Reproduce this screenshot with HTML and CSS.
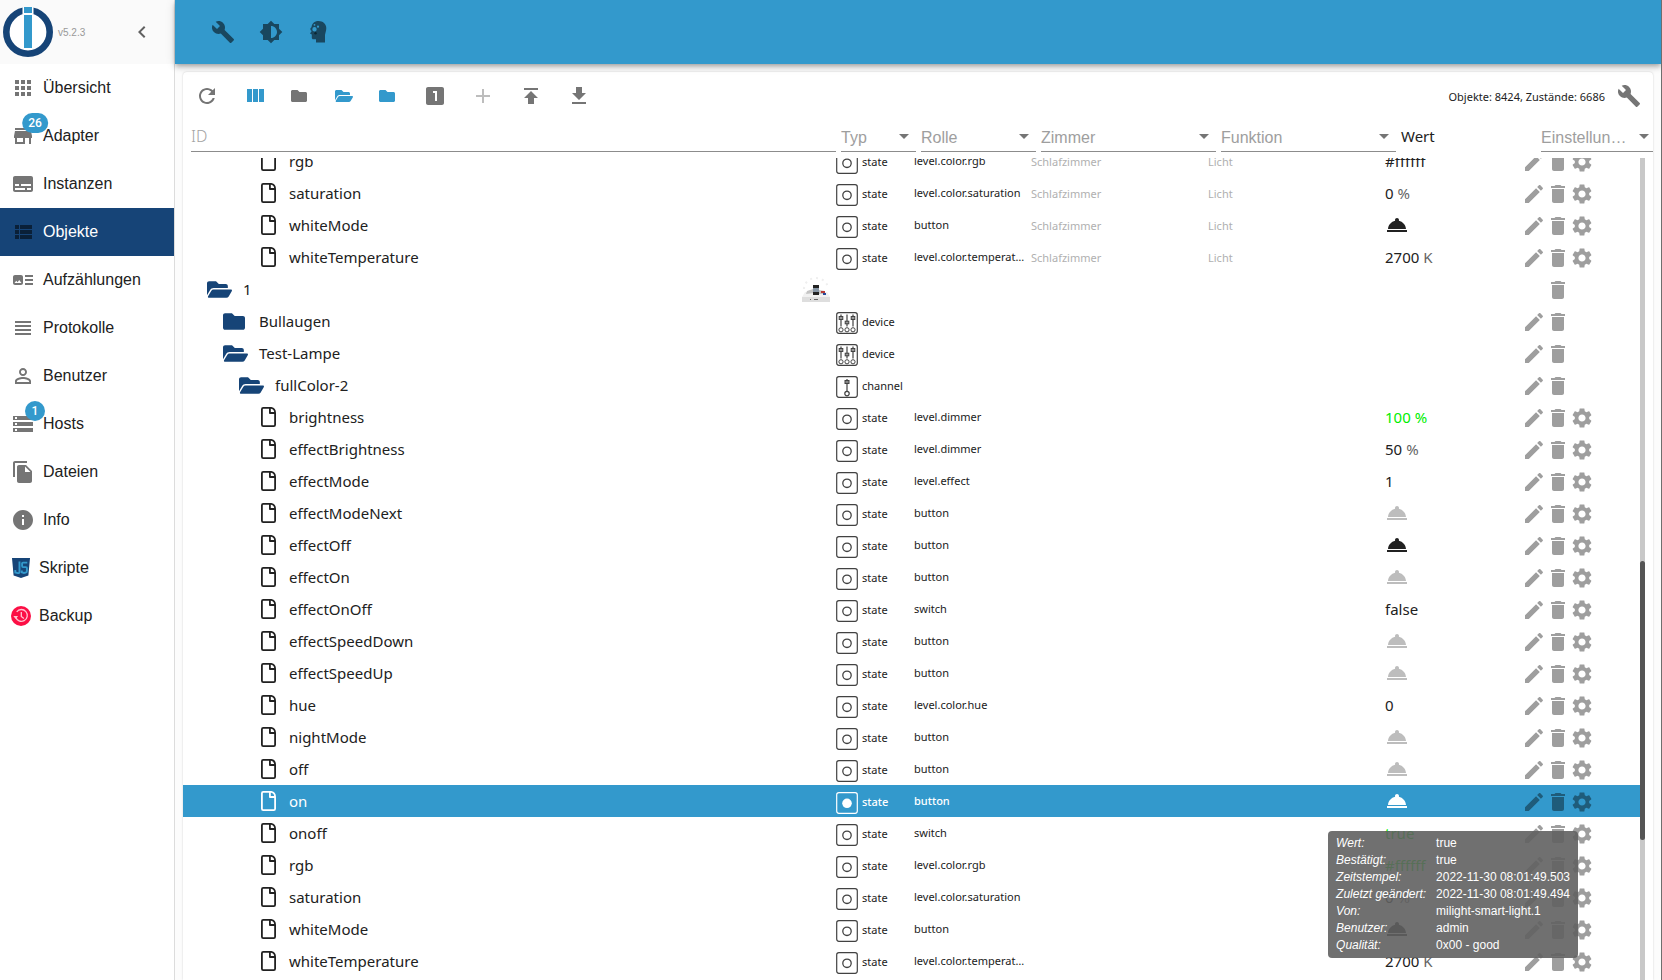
FILE: index.html
```html
<!DOCTYPE html>
<html lang="de">
<head>
<meta charset="utf-8">
<title>Objekte - ioBroker</title>
<link rel="stylesheet" href="styles.css">
</head>
<body>
<svg class="sprite" aria-hidden="true">
  <symbol id="i-build" viewBox="0 0 24 24"><path d="M22.7 19l-9.1-9.1c.9-2.3.4-5-1.5-6.9-2-2-5-2.4-7.4-1.3L9 6 6 9 1.6 4.7C.4 7.1.9 10.1 2.9 12.1c1.9 1.9 4.6 2.4 6.9 1.5l9.1 9.1c.4.4 1 .4 1.4 0l2.3-2.3c.5-.4.5-1.1.1-1.4z"/></symbol>
  <symbol id="i-brightness" viewBox="0 0 24 24"><path d="M20 15.31L23.31 12 20 8.69V4h-4.69L12 .69 8.69 4H4v4.69L.69 12 4 15.31V20h4.69L12 23.31 15.31 20H20v-4.69zM12 18V6c3.31 0 6 2.69 6 6s-2.69 6-6 6z"/></symbol>
  <symbol id="i-head" viewBox="0 0 24 24"><path fill-rule="evenodd" d="M11.500 1C15.800 1 19.300 3.800 19.300 8c0 3-1 4.800-1.300 7V22.500H9V19.300H6.500C5.300 19.300 4.800 18.500 4.800 17.400V14.500L3 13.400 4.700 11C2.900 10.300 2.900 8 4.500 7.300 4.700 3.600 7.500 1 11.500 1zM7.500 7a2.200 2.200 0 1 0 0 4.400 2.200 2.200 0 1 0 0-4.400zM11 5.600a1.100 1.100 0 1 0 0 2.200 1.100 1.100 0 1 0 0-2.200zM7.500 3.900a.9.900 0 1 0 0 1.800.9.900 0 1 0 0-1.800z"/><circle cx="8.500" cy="13.300" r="1.200" fill="#0a2733"/></symbol>
  <symbol id="i-chevron" viewBox="0 0 24 24"><path d="M15.410 7.410L14 6l-6 6 6 6 1.410-1.410L10.830 12z"/></symbol>
  <symbol id="i-apps" viewBox="0 0 24 24"><path d="M4 8h4V4H4v4zm6 12h4v-4h-4v4zm-6 0h4v-4H4v4zm0-6h4v-4H4v4zm6 0h4v-4h-4v4zm6-10v4h4V4h-4zm-6 4h4V4h-4v4zm6 6h4v-4h-4v4zm0 6h4v-4h-4v4z"/></symbol>
  <symbol id="i-store" viewBox="0 0 24 24"><path d="M20 4H4v2h16V4zm1 10v-2l-1-5H4l-1 5v2h1v6h10v-6h4v6h2v-6h1zm-9 4H6v-4h6v4z"/></symbol>
  <symbol id="i-instances" viewBox="0 0 24 24"><path d="M20 4H4c-1.100 0-2 .9-2 2v12c0 1.100.9 2 2 2h16c1.100 0 2-.9 2-2V6c0-1.100-.9-2-2-2zM4 12h4v2H4v-2zm10 6H4v-2h10v2zm6 0h-4v-2h4v2zm0-4H10v-2h10v2z"/></symbol>
  <symbol id="i-list" viewBox="0 0 24 24"><path d="M4 14h4v-4H4v4zm0 5h4v-4H4v4zM4 9h4V5H4v4zm5 5h12v-4H9v4zm0 5h12v-4H9v4zM9 5v4h12V5H9z"/></symbol>
  <symbol id="i-enums" viewBox="0 0 24 24"><path d="M22 13h-8v-2h8v2zm0-6h-8v2h8V7zm-8 10h8v-2h-8v2zm-2-8v6c0 1.100-.9 2-2 2H4c-1.100 0-2-.9-2-2V9c0-1.100.9-2 2-2h6c1.100 0 2 .9 2 2zm-1.500 6l-2.250-3-1.750 2.260-1.250-1.510L3.500 15h7z"/></symbol>
  <symbol id="i-log" viewBox="0 0 24 24"><path d="M4 15h16v-2H4v2zm0 4h16v-2H4v2zm0-8h16V9H4v2zm0-6v2h16V5H4z"/></symbol>
  <symbol id="i-user" viewBox="0 0 24 24"><path d="M12 5.900c1.160 0 2.100.94 2.100 2.100s-.94 2.100-2.100 2.100S9.900 9.160 9.900 8s.94-2.100 2.100-2.100m0 9c2.970 0 6.100 1.460 6.100 2.100v1.100H5.900V17c0-.64 3.130-2.100 6.100-2.100M12 4C9.790 4 8 5.790 8 8s1.790 4 4 4 4-1.790 4-4-1.790-4-4-4zm0 9c-2.670 0-8 1.340-8 4v3h16v-3c0-2.660-5.330-4-8-4z"/></symbol>
  <symbol id="i-hosts" viewBox="0 0 24 24"><path d="M2 20h20v-4H2v4zm2-3h2v2H4v-2zM2 4v4h20V4H2zm4 3H4V5h2v2zm-4 7h20v-4H2v4zm2-3h2v2H4v-2z"/></symbol>
  <symbol id="i-files" viewBox="0 0 24 24"><path d="M16 1H4c-1.100 0-2 .9-2 2v14h2V3h12V1zm-1 4l6 6v10c0 1.100-.9 2-2 2H7.990C6.890 23 6 22.100 6 21l.01-14c0-1.100.89-2 1.990-2h7zm-1 7h5.500L14 6.500V12z"/></symbol>
  <symbol id="i-info" viewBox="0 0 24 24"><path d="M12 2C6.480 2 2 6.480 2 12s4.480 10 10 10 10-4.480 10-10S17.520 2 12 2zm1 15h-2v-6h2v6zm0-8h-2V7h2v2z"/></symbol>
  <symbol id="i-script" viewBox="0 0 20 20"><path fill="#164477" d="M1 0h18l-1.600 17.600L10 20l-7.400-2.400z"/><path fill="none" stroke="#3399cc" stroke-width="1.900" d="M8.500 3.500v10.200c0 1.200-.7 1.600-1.800 1.400L4.300 14.500V12M16.300 4.600h-4.300c-.6 0-.9.3-.9.900v2.600c0 .6.300 1 .9 1h2.900c.7 0 1 .3 1 .9v3c0 1-.5 1.400-1.300 1.600l-1.600.4-2.200-.7v-1.700"/></symbol>
  <symbol id="i-backup" viewBox="0 0 20 20"><circle cx="10" cy="10" r="10" fill="#fc0f45"/><path fill="none" stroke="#ffc4d1" stroke-width="1.300" d="M4.700 11a5.900 5.900 0 1 0 1-5.200M10.300 6v4.400l2.600 2"/><path fill="#ffc4d1" d="M2.300 10h4.800l-2.400 3z"/></symbol>
  <symbol id="i-refresh" viewBox="0 0 24 24"><path d="M17.650 6.350C16.200 4.900 14.210 4 12 4c-4.420 0-7.990 3.580-7.990 8s3.570 8 7.990 8c3.730 0 6.840-2.550 7.730-6h-2.080c-.82 2.330-3.040 4-5.650 4-3.310 0-6-2.690-6-6s2.690-6 6-6c1.660 0 3.140.69 4.220 1.780L13 11h7V4l-2.350 2.350z"/></symbol>
  <symbol id="i-columns" viewBox="0 0 24 24"><path d="M10 18h5V5h-5v13zm-6 0h5V5H4v13zM16 5v13h5V5h-5z"/></symbol>
  <symbol id="i-folder" viewBox="0 0 512 384"><path d="M464 64H272L208 0H48C21.500 0 0 21.500 0 48v288c0 26.500 21.500 48 48 48h416c26.500 0 48-21.500 48-48V112c0-26.500-21.500-48-48-48z"/></symbol>
  <symbol id="i-folder-open" viewBox="0 0 576 384"><path transform="translate(0 -64)" d="M572.694 292.093L500.270 416.248A63.997 63.997 0 0 1 444.989 448H45.025c-18.523 0-30.064-20.093-20.731-36.093l72.424-124.155A64 64 0 0 1 152 256h399.964c18.523 0 30.064 20.093 20.730 36.093zM152 224h328v-48c0-26.510-21.490-48-48-48H272l-64-64H48C21.490 64 0 85.490 0 112v278.046l69.077-118.418C86.214 242.250 117.989 224 152 224z"/></symbol>
  <symbol id="i-one" viewBox="0 0 24 24"><path d="M19 3H5c-1.100 0-2 .9-2 2v14c0 1.100.9 2 2 2h14c1.100 0 2-.9 2-2V5c0-1.100-.9-2-2-2zm-5 14h-2V9h-2V7h4v10z"/></symbol>
  <symbol id="i-add" viewBox="0 0 24 24"><path d="M19 13h-6v6h-2v-6H5v-2h6V5h2v6h6v2z"/></symbol>
  <symbol id="i-upload" viewBox="0 0 24 24"><path d="M5 4v2h14V4H5zm0 10h4v6h6v-6h4l-7-7-7 7z"/></symbol>
  <symbol id="i-download" viewBox="0 0 24 24"><path d="M19 9h-4V3H9v6H5l7 7 7-7zM5 18v2h14v-2H5z"/></symbol>
  <symbol id="i-arrow" viewBox="0 0 24 24"><path d="M7 10l5 5 5-5z"/></symbol>
  <symbol id="i-file" viewBox="0 0 15 20"><path fill="none" stroke="currentColor" stroke-width="1.800" stroke-linejoin="round" d="M2.200.9H10.300Q14.100 1.600 14.100 6V17.800Q14.100 19.100 12.800 19.100H2.200Q.9 19.100.9 17.800V2.200Q.9.9 2.200.9zM8.900 1V6H14"/></symbol>
  <symbol id="i-state" viewBox="0 0 22 22"><g fill="none" stroke="currentColor"><rect x=".7" y=".7" width="20.600" height="20.600" rx="2.200" stroke-width="1.200"/><circle cx="11" cy="11.300" r="4.200" stroke-width="1.300"/></g></symbol>
  <symbol id="i-state-on" viewBox="0 0 22 22"><rect x=".7" y=".7" width="20.600" height="20.600" rx="2.200" fill="none" stroke="currentColor" stroke-width="1.200"/><circle cx="11" cy="11.300" r="4.800"/></symbol>
  <symbol id="i-channel" viewBox="0 0 22 22"><g fill="none" stroke="currentColor"><rect x=".7" y=".7" width="20.600" height="20.600" rx="2.200" stroke-width="1.200"/><path stroke-width="1.200" d="M11 3v12"/><rect x="9" y="4.500" width="4" height="3" fill="#888"/><circle cx="11" cy="17.600" r="2.200" stroke-width="1.200"/></g></symbol>
  <symbol id="i-device" viewBox="0 0 22 22"><g fill="none" stroke="currentColor"><rect x=".7" y=".7" width="20.600" height="20.600" rx="2.200" stroke-width="1.200"/><path stroke-width="1.200" d="M5 2.500v12M11 2.500v12M17 2.500v12"/><g fill="#999"><rect x="3.200" y="4.500" width="3.600" height="3"/><rect x="9.200" y="9.200" width="3.600" height="2.600"/><rect x="15.200" y="4.500" width="3.600" height="3"/></g><circle cx="5" cy="17.800" r="2.100"/><circle cx="11" cy="17.800" r="2.100"/><circle cx="17" cy="17.800" r="2.100"/></g></symbol>
  <symbol id="i-gateway" viewBox="0 0 28 28"><path fill="#f1f1f1" d="M3 17h22l3 5v5H0v-5z"/><path fill="#dedede" d="M0 22h28v5H0z"/><path fill="#c4c4c4" d="M5 16l6-2 1 4-8 1zM17 15l6 1v3h-6z"/><path fill="#222" d="M11 10h6v3h-6zM11 17h6v3h-6z"/><path fill="#8796a5" d="M11 13h6v4h-6z"/><path fill="#b63a35" d="M19 16h4v2h-4z"/><path fill="#274a9b" d="M21 18h3v2h-3z"/><path fill="#666" d="M12 24h4v1h-4zM8 24h1v1H8z"/><path fill="none" stroke="#efefef" stroke-width="2" stroke-dasharray="2 4" d="M2 14A12 11 0 0 1 26 14"/></symbol>
  <symbol id="i-edit" viewBox="0 0 24 24"><path d="M3 17.250V21h3.750L17.810 9.940l-3.750-3.750L3 17.250zM20.710 7.040c.39-.39.39-1.020 0-1.410l-2.340-2.340c-.39-.39-1.020-.39-1.410 0l-1.830 1.830 3.750 3.750 1.830-1.830z"/></symbol>
  <symbol id="i-delete" viewBox="0 0 24 24"><path d="M6 19c0 1.100.9 2 2 2h8c1.100 0 2-.9 2-2V7H6v12zM19 4h-3.500l-1-1h-5l-1 1H5v2h14V4z"/></symbol>
  <symbol id="i-gear" viewBox="0 0 24 24"><path d="M19.140 12.940c.04-.3.060-.61.060-.94 0-.32-.02-.64-.07-.94l2.030-1.580c.18-.14.230-.41.120-.61l-1.920-3.320c-.12-.22-.37-.29-.59-.22l-2.390.96c-.5-.38-1.030-.7-1.620-.94l-.36-2.540c-.04-.24-.24-.41-.48-.41h-3.840c-.24 0-.43.170-.47.410l-.36 2.540c-.59.240-1.130.570-1.620.940l-2.390-.96c-.22-.08-.47 0-.59.220L2.740 8.870c-.12.210-.08.470.120.610l2.030 1.580c-.05.300-.09.630-.09.940s.02.640.070.940l-2.030 1.580c-.18.140-.23.410-.12.610l1.920 3.320c.12.220.37.290.59.220l2.390-.96c.5.380 1.030.700 1.620.940l.36 2.540c.05.240.24.410.48.410h3.840c.24 0 .44-.17.470-.41l.36-2.540c.59-.24 1.130-.56 1.620-.94l2.390.96c.22.080.470 0 .590-.22l1.920-3.320c.12-.22.070-.47-.12-.61l-2.010-1.580zM12 15.600c-1.980 0-3.600-1.620-3.600-3.600s1.620-3.600 3.600-3.600 3.600 1.620 3.600 3.600-1.620 3.600-3.600 3.600z"/></symbol>
  <symbol id="i-bell" viewBox="0 0 24 24"><path d="M2 17h20v2H2zm11.840-9.210c.1-.24.160-.51.160-.79 0-1.100-.9-2-2-2s-2 .9-2 2c0 .28.060.55.160.79C6.250 8.600 3.270 11.930 3 16h18c-.27-4.070-3.250-7.400-7.160-8.210z"/></symbol>
</svg>

<div class="app">
  <aside class="sidebar">
    <div class="brand">
      <svg class="logo" viewBox="0 0 50 50" role="img" aria-label="ioBroker"><circle cx="25" cy="25" r="21.700" fill="#fff" stroke="#164477" stroke-width="6.600"/><path fill="#fff" d="M19.500 0h11v42h-11z"/><path fill="#3399cc" d="M21 0h8v6h-8zM21 8h8v33h-8z"/></svg>
      <span class="version">v5.2.3</span>
      <button class="collapse" type="button" aria-label="Menü einklappen"><svg class="icon"><use href="#i-chevron"/></svg></button>
    </div>
    <nav class="menu">
      <a href="#uebersicht"><svg class="icon"><use href="#i-apps"/></svg>Übersicht</a>
      <a href="#adapter"><svg class="icon"><use href="#i-store"/></svg>Adapter<span class="badge">26</span></a>
      <a href="#instanzen"><svg class="icon"><use href="#i-instances"/></svg>Instanzen</a>
      <a href="#objekte" class="active" aria-current="page"><svg class="icon"><use href="#i-list"/></svg>Objekte</a>
      <a href="#aufzaehlungen"><svg class="icon"><use href="#i-enums"/></svg>Aufzählungen</a>
      <a href="#protokolle"><svg class="icon"><use href="#i-log"/></svg>Protokolle</a>
      <a href="#benutzer"><svg class="icon"><use href="#i-user"/></svg>Benutzer</a>
      <a href="#hosts"><svg class="icon"><use href="#i-hosts"/></svg>Hosts<span class="badge">1</span></a>
      <a href="#dateien"><svg class="icon"><use href="#i-files"/></svg>Dateien</a>
      <a href="#info"><svg class="icon"><use href="#i-info"/></svg>Info</a>
      <a href="#skripte"><svg class="icon-small"><use href="#i-script"/></svg>Skripte</a>
      <a href="#backup"><svg class="icon-small"><use href="#i-backup"/></svg>Backup</a>
    </nav>
  </aside>

  <div class="content">
    <header class="appbar">
      <button type="button" aria-label="Systemeinstellungen"><svg class="icon"><use href="#i-build"/></svg></button>
      <button type="button" aria-label="Farbschema"><svg class="icon"><use href="#i-brightness"/></svg></button>
      <button type="button" aria-label="Expertenmodus"><svg class="icon"><use href="#i-head"/></svg></button>
    </header>

    <main class="paper">
      <div class="toolbar">
        <button type="button" aria-label="Aktualisieren"><svg class="icon"><use href="#i-refresh"/></svg></button>
        <button type="button" class="on" aria-label="Spalten"><svg class="icon"><use href="#i-columns"/></svg></button>
        <button type="button" class="narrow" aria-label="Alle zuklappen"><svg class="fa"><use href="#i-folder"/></svg></button>
        <button type="button" class="narrow on" aria-label="Alle aufklappen"><svg class="fa fa-open"><use href="#i-folder-open"/></svg></button>
        <button type="button" class="narrow on" aria-label="Eine Ebene zuklappen"><svg class="fa"><use href="#i-folder"/></svg></button>
        <button type="button" aria-label="Eine Ebene aufklappen"><svg class="icon"><use href="#i-one"/></svg></button>
        <button type="button" disabled aria-label="Objekt hinzufügen"><svg class="icon"><use href="#i-add"/></svg></button>
        <button type="button" aria-label="Hochladen"><svg class="icon"><use href="#i-upload"/></svg></button>
        <button type="button" aria-label="Herunterladen"><svg class="icon"><use href="#i-download"/></svg></button>
        <span class="counts">Objekte: 8424, Zustände: 6686</span>
        <button type="button" aria-label="Spalten konfigurieren"><svg class="icon"><use href="#i-build"/></svg></button>
      </div>

      <div class="filters">
        <input class="filter-id" type="text" placeholder="ID" aria-label="ID">
        <div class="filter"><select aria-label="Typ"><option>Typ</option></select><svg class="icon"><use href="#i-arrow"/></svg></div>
        <div class="filter"><select aria-label="Rolle"><option>Rolle</option></select><svg class="icon"><use href="#i-arrow"/></svg></div>
        <div class="filter"><select aria-label="Zimmer"><option>Zimmer</option></select><svg class="icon"><use href="#i-arrow"/></svg></div>
        <div class="filter"><select aria-label="Funktion"><option>Funktion</option></select><svg class="icon"><use href="#i-arrow"/></svg></div>
        <span class="filter-title">Wert</span>
        <div class="filter"><select aria-label="Einstellungen"><option>Einstellungen</option></select><svg class="icon"><use href="#i-arrow"/></svg></div>
      </div>

      <div class="list">
        <div class="rows">
          <table class="tree">
            <colgroup><col><col class="c-type"><col class="c-role"><col class="c-enum"><col class="c-enum"><col class="c-value"><col class="c-actions"></colgroup>
            <tbody id="objects"></tbody>
          </table>
        </div>
        <div class="track"><div class="thumb"></div></div>
        <dl class="tooltip" role="tooltip">
          <dt>Wert:</dt><dd>true</dd>
          <dt>Bestätigt:</dt><dd>true</dd>
          <dt>Zeitstempel:</dt><dd>2022-11-30 08:01:49.503</dd>
          <dt>Zuletzt geändert:</dt><dd>2022-11-30 08:01:49.494</dd>
          <dt>Von:</dt><dd>milight-smart-light.1</dd>
          <dt>Benutzer:</dt><dd>admin</dd>
          <dt>Qualität:</dt><dd>0x00 - good</dd>
        </dl>
      </div>
    </main>
  </div>
</div>
<script src="objects.js"></script>
</body>
</html>
```

FILE: styles.css
```css
* { box-sizing: border-box; }

body {
  margin: 0;
  font-family: "Liberation Sans", Arial, sans-serif;
  font-size: 16px;
  color: #212121;
  background: #fff;
}

button {
  border: 0;
  padding: 0;
  background: none;
  color: inherit;
  font: inherit;
  display: flex;
  align-items: center;
  justify-content: center;
}

svg { fill: currentColor; flex: none; display: block; }
.sprite { position: absolute; width: 0; height: 0; }
.icon { width: 24px; height: 24px; }
.icon-small { width: 20px; height: 20px; }

.app {
  display: flex;
  height: 100vh;
  overflow: hidden;
  border-right: 1px solid #6e6e6e;
}

/* Sidebar */
.sidebar {
  width: 175px;
  flex: none;
  border-right: 1px solid #dcdcdc;
}
.brand {
  height: 64px;
  display: flex;
  align-items: center;
  padding: 0 20px 0 3px;
  background: #fafafa;
}
.logo { width: 50px; height: 50px; }
.version {
  flex: 1;
  padding-left: 5px;
  font-size: 10px;
  color: #999;
}
.collapse { color: #616161; }

.menu a {
  position: relative;
  height: 48px;
  display: flex;
  align-items: center;
  gap: 8px;
  padding-left: 11px;
  color: #212121;
  text-decoration: none;
}
.menu svg { color: #757575; }
.menu .active { background: #164477; color: #fff; }
.menu .active svg { color: #0a2038; }
.badge {
  position: absolute;
  left: 35px;
  top: 11px;
  transform: translate(-50%, -50%);
  min-width: 20px;
  height: 20px;
  padding: 0 6px;
  border-radius: 10px;
  background: #3399cc;
  color: #fff;
  font: 500 12px/20px Roboto, sans-serif;
  text-align: center;
}

/* Main area */
.content {
  flex: 1;
  min-width: 0;
  display: flex;
  flex-direction: column;
  background: #fcfcfc;
}
.appbar {
  position: relative;
  flex: none;
  height: 64px;
  display: flex;
  align-items: center;
  padding-left: 24px;
  background: #3399cc;
  color: #19475f;
  box-shadow: 0 2px 4px -1px rgba(0, 0, 0, .2), 0 4px 5px rgba(0, 0, 0, .14), 0 1px 10px rgba(0, 0, 0, .12);
}
.appbar button { width: 48px; height: 48px; }

.paper {
  flex: 1;
  min-height: 0;
  display: flex;
  flex-direction: column;
  margin: 8px 8px 0;
  border-radius: 4px 4px 0 0;
  background: #fff;
  box-shadow: 0 0 2px rgba(0, 0, 0, .2);
  overflow: hidden;
}

.toolbar {
  height: 48px;
  flex: none;
  display: flex;
  align-items: center;
  color: #757575;
}
.toolbar button { width: 48px; height: 48px; }
.toolbar .narrow { width: 44px; justify-content: flex-start; padding-left: 12px; }
.toolbar .on { color: #3399cc; }
.toolbar button:disabled { color: #bdbdbd; }
.fa { width: 16px; height: 12px; }
.fa-open { width: 18px; }
.counts {
  margin-left: auto;
  font: 11px "Noto Sans", sans-serif;
  color: #212121;
}

/* The last filter runs under the scrollbar gutter */
.filters {
  flex: none;
  display: grid;
  grid-template-columns: minmax(0, 1fr) 75px 115px 175px 175px 135px 115px;
  gap: 5px;
  height: 32px;
  margin: 0 -3px 6px 0;
  padding-left: 8px;
}
.filter-id,
.filter select {
  width: 100%;
  height: 32px;
  border: 0;
  border-bottom: 1px solid #8c8c8c;
  border-radius: 0;
  outline: 0;
  background: none;
}
.filter-id { padding: 0; font: 300 16px "Noto Sans", sans-serif; }
.filter-id::placeholder { color: #a2a2a2; opacity: 1; }
.filter { position: relative; }
.filter select {
  appearance: none;
  padding: 4px 24px 0 0;
  font: inherit;
  color: #9e9e9e;
  text-overflow: ellipsis;
  white-space: nowrap;
  overflow: hidden;
}
.filter svg {
  position: absolute;
  right: 0;
  top: 4px;
  color: #757575;
  pointer-events: none;
}
.filter-title { font: 15px/32px "Noto Sans", sans-serif; }

/* Object tree */
.list {
  position: relative;
  flex: 1;
  min-height: 0;
  display: flex;
  padding-right: 8px;
  overflow: hidden;
}
.rows { flex: 1; min-width: 0; }
.tree {
  width: 100%;
  margin-top: -13px;
  table-layout: fixed;
  border-collapse: collapse;
  font: 11px "Noto Sans", sans-serif;
}
.c-type { width: 78px; }
.c-role { width: 117px; }
.c-enum { width: 177px; }
.c-value { width: 137px; }
.c-actions { width: 118px; }
.tree tr { height: 32px; }
.tree td { padding: 0; height: 32px; }
.cell { display: flex; align-items: center; height: 32px; }

.name { font-size: 15px; }
.name .label { flex: 1; }
.depth-0 { padding-left: 24px; }
.depth-1 { padding-left: 40px; }
.depth-2 { padding-left: 56px; }
.depth-3 { padding-left: 78px; }
.glyph { width: 36px; color: #164477; }
.depth-3 .glyph { width: 28px; color: #212121; }
.t-folder { width: 22px; height: 17px; }
.t-open { width: 25px; height: 17px; }
.t-file { width: 15px; height: 20px; }
.gateway { width: 28px; height: 28px; margin-right: 6px; }

.type { gap: 4px; }
.type svg { width: 22px; height: 22px; margin-top: 4px; color: #424242; }
.role { display: block; line-height: 32px; padding-right: 4px; overflow: hidden; text-overflow: ellipsis; white-space: nowrap; }
.enum { color: #b0b0b0; }
.value { font-size: 15px; }
.value .unit { padding-left: 4px; opacity: .7; }
.value.ack { color: #0e0; }
.value.ack .unit { opacity: 1; }
.value.idle { color: #bdbdbd; }
.actions { color: #9e9e9e; padding-top: 2px; }
.actions button { width: 24px; height: 24px; }
.actions .only { margin-left: 24px; }

.selected { background: #3399cc; color: #fff; }
.selected .glyph, .selected .type svg { color: #fff; }
.selected .actions { color: #1f5c7a; }
.selected .type, .selected .role { font-weight: 500; }

.track {
  width: 5px;
  flex: none;
  background: #c8c8c8;
  display: grid;
  grid-template-rows: 49fr 34fr 17fr;
}
.thumb { grid-row: 2; background: #555; border-radius: 3px; }

.tooltip {
  position: absolute;
  top: 673px;
  right: 75px;
  margin: 0;
  padding: 4px 8px;
  display: grid;
  grid-template-columns: 100px auto;
  border-radius: 4px;
  background: rgba(97, 97, 97, .9);
  color: #fff;
  font: 500 12px/17px "Liberation Sans", Arial, sans-serif;
}
.tooltip dt { font-style: italic; }
.tooltip dd { margin: 0; }
```

FILE: objects.js
```js
const leaf = (name, role, value, extra = {}) => ({ name, depth: 3, type: 'state', role, value, ...extra });
const lamp = { room: 'Schlafzimmer', func: 'Licht' };

const objects = [
  leaf('rgb', 'level.color.rgb', '#ffffff', lamp),
  leaf('saturation', 'level.color.saturation', '0', { unit: '%', ...lamp }),
  leaf('whiteMode', 'button', 'bell', lamp),
  leaf('whiteTemperature', 'level.color.temperature', '2700', { unit: 'K', ...lamp }),
  { name: '1', depth: 0, open: true, gateway: true },
  { name: 'Bullaugen', depth: 1, type: 'device' },
  { name: 'Test-Lampe', depth: 1, open: true, type: 'device' },
  { name: 'fullColor-2', depth: 2, open: true, type: 'channel' },
  leaf('brightness', 'level.dimmer', '100', { unit: '%', ack: true }),
  leaf('effectBrightness', 'level.dimmer', '50', { unit: '%' }),
  leaf('effectMode', 'level.effect', '1'),
  leaf('effectModeNext', 'button', 'bell', { idle: true }),
  leaf('effectOff', 'button', 'bell'),
  leaf('effectOn', 'button', 'bell', { idle: true }),
  leaf('effectOnOff', 'switch', 'false'),
  leaf('effectSpeedDown', 'button', 'bell', { idle: true }),
  leaf('effectSpeedUp', 'button', 'bell', { idle: true }),
  leaf('hue', 'level.color.hue', '0'),
  leaf('nightMode', 'button', 'bell', { idle: true }),
  leaf('off', 'button', 'bell', { idle: true }),
  leaf('on', 'button', 'bell', { selected: true }),
  leaf('onoff', 'switch', 'true', { ack: true }),
  leaf('rgb', 'level.color.rgb', '#ffffff', { ack: true }),
  leaf('saturation', 'level.color.saturation', '0', { unit: '%' }),
  leaf('whiteMode', 'button', 'bell'),
  leaf('whiteTemperature', 'level.color.temperature', '2700', { unit: 'K' }),
];

const svg = (id, cls) => `<svg class="${cls}"><use href="#i-${id}"/></svg>`;
const button = (id, label, cls = '') => `<button type="button" class="${cls}" aria-label="${label}">${svg(id, 'icon')}</button>`;

function treeIcon(o) {
  if (o.depth === 3) return svg('file', 't-file');
  return o.open ? svg('folder-open', 't-open') : svg('folder', 't-folder');
}

function value(o) {
  if (!o.value) return '';
  const cls = `cell value${o.ack ? ' ack' : ''}${o.idle ? ' idle' : ''}`;
  const body = o.value === 'bell' ? svg('bell', 'icon') : o.value;
  return `<div class="${cls}">${body}${o.unit ? `<span class="unit">${o.unit}</span>` : ''}</div>`;
}

function actions(o) {
  if (!o.type) return button('delete', 'Löschen', 'only');
  return button('edit', 'Bearbeiten') + button('delete', 'Löschen') + (o.value ? button('gear', 'Einstellungen') : '');
}

document.getElementById('objects').innerHTML = objects.map(o => `
  <tr class="${o.selected ? 'selected' : ''}">
    <td><div class="cell name depth-${o.depth}"><span class="glyph">${treeIcon(o)}</span><span class="label">${o.name}</span>${o.gateway ? svg('gateway', 'gateway') : ''}</div></td>
    <td>${o.type ? `<div class="cell type">${svg(o.selected ? 'state-on' : o.type, '')}${o.type}</div>` : ''}</td>
    <td><div class="cell role">${o.role || ''}</div></td>
    <td><div class="cell enum">${o.room || ''}</div></td>
    <td><div class="cell enum">${o.func || ''}</div></td>
    <td>${value(o)}</td>
    <td><div class="cell actions">${actions(o)}</div></td>
  </tr>`).join('');
```
